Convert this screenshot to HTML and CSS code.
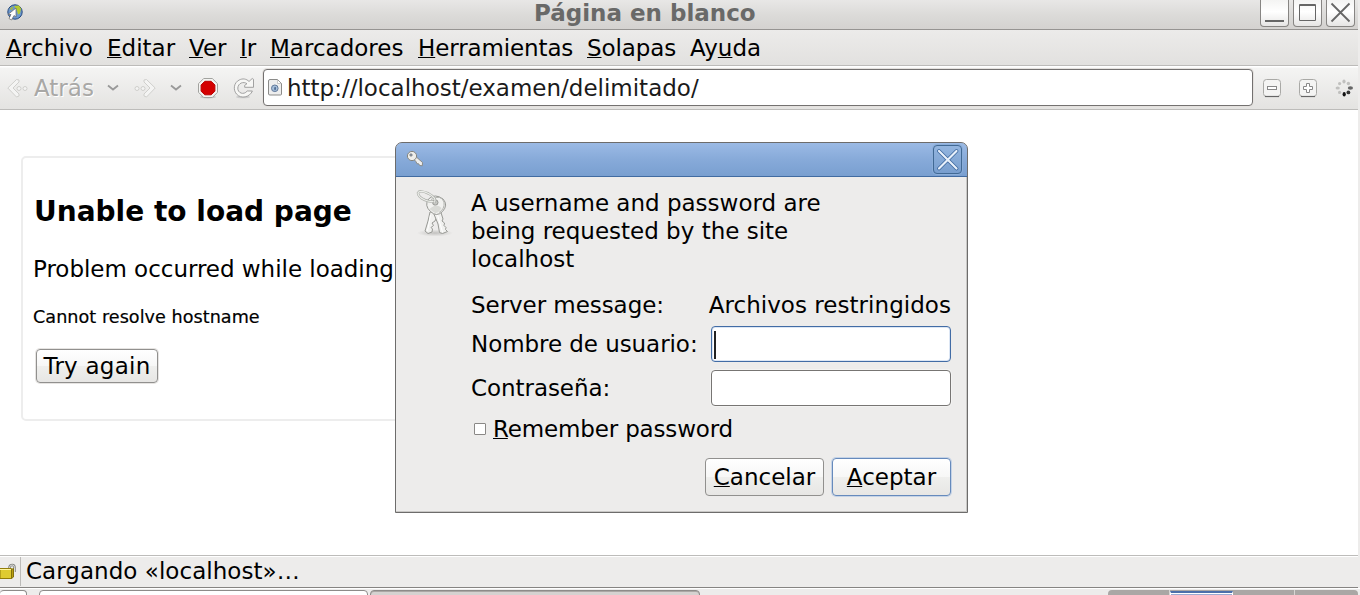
FILE: index.html
```html
<!DOCTYPE html>
<html lang="es">
<head>
<meta charset="utf-8">
<title>Página en blanco</title>
<link rel="stylesheet" href="styles.css">
</head>
<body>
<div class="screen">
  <main class="browser">
    <header class="titlebar">
      <svg class="app-icon" width="18" height="18" viewBox="0 0 18 18"><circle cx="9" cy="8" r="7.200" fill="#6b98cf" stroke="#24477e"/><path d="M8 2l5-.5 2 3-1 5-2 1-1-4z" fill="#b5c92f"/><path d="M3.500 4.500l3-2 1 1-2 3z" fill="#9db451"/><path d="M10 4v9l-2-1.500-2.500 4.500-2.500-1.500 2-4H2z" fill="#fff" stroke="#666" stroke-width=".7"/></svg>
      <h1 class="title"><span>Página en blanco</span></h1>
      <div class="window-buttons">
        <button class="window-button" aria-label="Minimizar"><svg width="27" height="26"><path d="M4 21h19" stroke="#666" stroke-width="2"/></svg></button>
        <button class="window-button" aria-label="Maximizar"><svg width="27" height="26"><path d="M5.500 4.500h16v16h-16zM5 5.500h17" fill="none" stroke="#666"/></svg></button>
        <button class="window-button" aria-label="Cerrar"><svg width="27" height="26"><path d="M4.500 3.500l18 18M22.500 3.500l-18 18" stroke="#666" stroke-width="1.800"/></svg></button>
      </div>
    </header>
    <nav class="menubar">
      <span><u>A</u>rchivo</span><span><u>E</u>ditar</span><span><u>V</u>er</span><span><u>I</u>r</span><span><u>M</u>arcadores</span><span><u>H</u>erramientas</span><span><u>S</u>olapas</span><span>Ay<u>u</u>da</span>
    </nav>
    <div class="toolbar">
      <div class="back">
        <svg width="22" height="22" viewBox="0 0 22 22" fill="#f4f4f3" stroke="#cfcfcc" stroke-width="1"><path d="M9.500 2.500L.8 11l8.700 9 2.500-1v-2l-6-6 6-6V3z"/><circle cx="12" cy="11.500" r="2"/><circle cx="18" cy="11.500" r="2"/></svg>
        <span>Atrás</span>
      </div>
      <svg class="chevron" width="12" height="8"><path d="M1 1.500l5 4 5-4" fill="none" stroke="#999" stroke-width="1.800"/></svg>
      <svg class="forward" width="22" height="22" viewBox="0 0 22 22" fill="#f4f4f3" stroke="#cfcfcc"><path d="M12.500 2.500l8.700 8.500-8.700 9-2.500-1v-2l6-6-6-6V3z"/><circle cx="3" cy="11.500" r="2"/><circle cx="9" cy="11.500" r="2"/></svg>
      <svg class="chevron second" width="12" height="8"><path d="M1 1.500l5 4 5-4" fill="none" stroke="#999" stroke-width="1.800"/></svg>
      <svg class="stop" width="22" height="22" viewBox="0 0 22 22"><ellipse cx="11" cy="20" rx="8" ry="1.500" fill="#c4c4c2"/><path d="M6.700 1.500h8.600l5.200 5.200v8.600l-5.200 5.200H6.700l-5.200-5.200V6.700z" fill="#f4f4f2" stroke="#a2a39f"/><path d="M7.800 4.300h6.400l3.700 3.700v6.200l-3.700 3.600H7.800l-3.700-3.600V8z" fill="#d40000" stroke="#b00"/></svg>
      <svg class="reload" width="22" height="22" viewBox="0 0 22 22"><ellipse cx="10" cy="20" rx="7" ry="1.300" fill="#ccc"/><path d="M16 4.500l3.200-3 1.300.8v8h-8.800v-2l2.300-1.600C10.500 4.200 5.200 6 4.800 11c-.3 5 6 7.500 9.400 3h5.200C17 20 8 22.500 3.500 17-.3 12.500 1 5.500 6.200 3 9.500 1.200 13.500 1.700 16 4.500z" fill="#f7f7f5" stroke="#999" stroke-width=".9"/></svg>
      <div class="address">
        <svg width="14" height="17" viewBox="0 0 14 17"><path d="M2 .5h7.500l4 4V15q0 1-1 1H2q-1.500 0-1.500-1V2Q.5.500 2 .5z" fill="#eee" stroke="#8b8b89"/><path d="M9.500 1v3.500H13" fill="#fff" stroke="#aaa" stroke-width=".6"/><circle cx="6.800" cy="9.300" r="3.300" fill="#a5bed9" stroke="#62799a"/><path d="M6 8.500l2-.5v2.500l-1.500 1z" fill="#526e96"/></svg>
        <span>http://localhost/examen/delimitado/</span>
      </div>
      <svg class="zoom-out" width="20" height="20" viewBox="0 0 20 20"><rect x="1.500" y="1.500" width="17" height="17" rx="3" fill="#f4f4f3" stroke="#a9a9a6"/><path d="M3 18.500h14" stroke="#666" stroke-width="1.200"/><rect x="5.500" y="8.500" width="9" height="3" fill="#fff" stroke="#888"/></svg>
      <svg class="zoom-in" width="20" height="20" viewBox="0 0 20 20"><rect x="1.500" y="1.500" width="17" height="17" rx="3" fill="#f4f4f3" stroke="#a9a9a6"/><path d="M3 18.500h14" stroke="#666" stroke-width="1.200"/><path d="M8.500 5.500h3v3h3v3h-3v3h-3v-3h-3v-3h3z" fill="#fff" stroke="#888"/></svg>
      <svg class="spinner" width="18" height="18" viewBox="0 0 18 18"><g fill="#c0c0be"><ellipse cx="9" cy="2.500" rx="1.600" ry="2.100"/><circle cx="13.400" cy="4.500" r="1.700"/><circle cx="4.600" cy="4.600" r="1.600"/><ellipse cx="2.700" cy="9" rx="2.100" ry="1.500"/><circle cx="4.600" cy="13.400" r="1.600"/></g><ellipse cx="15.400" cy="9" rx="2.600" ry="1.700" fill="#666"/><circle cx="13.400" cy="13.400" r="1.900" fill="#333"/><ellipse cx="9.200" cy="15.200" rx="1.600" ry="2.300" fill="#111"/></svg>
    </div>
    <section class="page">
      <article class="error">
        <h2>Unable to load page</h2>
        <p class="problem">Problem occurred while loading</p>
        <p class="reason">Cannot resolve hostname</p>
        <button class="button retry">Try again</button>
      </article>
    </section>
    <footer class="status">
      <svg width="18" height="18" viewBox="0 0 18 18"><path d="M9.500 6V4.200Q10 2 12.300 2 14.500 2 14.500 4.500V9" fill="none" stroke="#858783" stroke-width="2.600"/><path d="M9.500 6V4.200Q10 2 12.300 2 14.500 2 14.500 4.500V9" fill="none" stroke="#ddd" stroke-width="1"/><path d="M0 5.500h11.500v10H0z" fill="#dfcb31" stroke="#927c08"/><path d="M11.500 6.500l2-1v8.500l-2 1.500z" fill="#b99d12" stroke="#81700c"/><path d="M0 6.500h11" stroke="#fff6a0"/></svg>
      <span>Cargando «localhost»…</span>
    </footer>
  </main>
  <div class="taskbar">
    <span class="task first"></span><span class="task second"></span><span class="task active"></span>
    <div class="pager"><span></span><span class="current"></span><span></span><span></span></div>
  </div>
  <div class="dialog" role="dialog">
    <header class="dialog-title">
      <svg width="18" height="18" viewBox="0 0 18 18"><path d="M7.700 9l2.300-2.300 6.500 5.800-.2 3.300-2.600-.3-1-1.700-1.800-.1-.7-1.800z" fill="#eee" stroke="#85857f" stroke-width=".9"/><circle cx="6" cy="6" r="4.600" fill="#eeeeea" stroke="#85857f"/><circle cx="5" cy="5" r="1.300" fill="#8a96a5" stroke="#777" stroke-width=".5"/></svg>
      <button class="dialog-close" aria-label="Cerrar"><svg width="27" height="27"><path d="M5 5l17.500 17.500M22.500 5L5 22.500" stroke="#3c679d" stroke-width="3.800" stroke-linecap="round"/><path d="M5 5l17.500 17.500M22.500 5L5 22.500" stroke="#e9f1fb" stroke-width="2.200" stroke-linecap="round"/></svg></button>
    </header>
    <div class="dialog-body">
      <svg class="keys" width="38" height="48" viewBox="0 0 38 48"><defs><radialGradient id="shade"><stop offset="0" stop-color="#c2c1bf"/><stop offset="1" stop-color="#edeceb"/></radialGradient></defs><ellipse cx="19" cy="43" rx="18" ry="3.500" fill="url(#shade)"/><g stroke="#979894" fill="#f1f1ef"><path d="M14 22l-2 9-3 10 3 2.500 4-1.500.5-3-1.500-1.500 2.500-2-1.500-2.500 3-2 4-9z"/><path d="M17.500 23l4.500 11 1.500 8.500 3 1 5-2-2-2 .5-2-2-2 .5-2.500-2.500-2 1-2-2.500-8z"/><path d="M12.500 9Q19 3 27 9q5.500 6-.5 12.500-6 6-12 0-6.500-6-2-12.500z"/><path d="M15 9.500q10-5.500 13 2.500 1 7-5 10.500" fill="none" stroke="#b4b5b1"/><path d="M14.500 25l-3 16M21.500 25l5 17" fill="none" stroke="#fff"/><circle cx="19.300" cy="12.500" r="2.700" fill="#c6c7c3"/></g><path d="M13.500 19q7-6.500 12-1-4 7-8 4z" fill="#d9dad6"/><g fill="none"><path d="M18.500 12.500Q21 8 12.500 3.500 3.500-.5 2 3q0 4 7 7 5 2 8.500 1.500" stroke="#adafaa" stroke-width="2.500"/><path d="M18.500 12.500Q21 8 12.500 3.500 3.500-.5 2 3q0 4 7 7 5 2 8.500 1.500" stroke="#eceeea" stroke-width="1.200"/></g></svg>
      <form class="form" onsubmit="return false">
        <p class="message">A username and password are<br>being requested by the site<br>localhost</p>
        <div class="row server"><span>Server message:</span><span class="realm">Archivos restringidos</span></div>
        <div class="row user"><span>Nombre de usuario:</span><div class="field focused"><i></i></div></div>
        <div class="row secret"><span>Contraseña:</span><div class="field"></div></div>
        <div class="remember"><i class="checkbox"></i><span><u>R</u>emember password</span></div>
        <div class="actions"><button class="button"><span><u>C</u>ancelar</span></button><button class="button default"><span><u>A</u>ceptar</span></button></div>
      </form>
    </div>
  </div>
</div>
</body>
</html>
```

FILE: styles.css
```css
* { box-sizing: border-box; }
body { margin: 0; overflow: hidden; background: #edeceb; font: 23px/28px "DejaVu Sans", sans-serif; color: #000; }
button { font: inherit; color: inherit; margin: 0; padding: 0; }
h1, h2, p { margin: 0; }
svg { display: block; flex: none; }
u { text-decoration-thickness: 1px; text-underline-offset: 1px; text-decoration-skip-ink: none; }
.screen { position: relative; width: 1360px; height: 595px; overflow: hidden; white-space: nowrap; }
.browser { width: 1358px; height: 588px; display: flex; flex-direction: column; border-bottom: 1px solid #868482; }
.titlebar { display: flex; height: 30px; flex: none; border-bottom: 1px solid #969492; background: linear-gradient(#e8e7e6, #dcdbd9 50%, #d4d2d0); }
.app-icon { margin: 4px 0 0 6px; }
.title { flex: 1; padding: 0 0 0 510px; font-size: 23px; line-height: 26px; color: #696968; }
.window-buttons { display: flex; gap: 4px; padding-right: 3px; }
.window-button { width: 29px; height: 27px; border: 1px solid #878583; border-top: 0; border-radius: 0 0 4px 4px; background: linear-gradient(#f4f4f3, #fff 45%, #e6e5e4); }
.menubar { display: flex; flex: none; height: 36px; padding: 4px 0 0 6px; background: linear-gradient(#ecebea, #e2e1df); border-bottom: 1px solid #bcbbb9; }
.menubar span { width: 101px; }
.menubar span:first-child { letter-spacing: .12px; }
.menubar span:nth-child(2) { width: 82px; }
.menubar span:nth-child(3) { width: 51px; }
.menubar span:nth-child(4) { width: 30px; }
.menubar span:nth-child(5) { width: 148px; }
.menubar span:nth-child(6) { width: 169px; letter-spacing: -.12px; }
.menubar span:nth-child(7) { width: 103px; letter-spacing: -.12px; }
.toolbar { display: flex; align-items: center; flex: none; height: 44px; padding-left: 7px; background: linear-gradient(#fff 1px, #f4f4f3 2px, #e4e3e1); border-bottom: 1px solid #bdbcba; }
.back { display: flex; align-items: center; width: 100px; gap: 5px; color: #a9a8a6; text-shadow: 1px 1px #fff; }
.forward { margin-left: 15px; }
.chevron.second { margin-left: 14px; }
.stop { margin-left: 15px; }
.reload { margin-left: 14px; }
.address { display: flex; align-items: center; width: 990px; height: 37px; margin-left: 8px; padding-left: 4px; gap: 5px; background: #fff; border: 1px solid #737170; border-radius: 4px; box-shadow: 0 0 0 1px #e4e1de; color: #1a1a1a; }
.zoom-out { margin-left: 9px; }
.zoom-in { margin-left: 16px; }
.spinner { margin-left: 17px; }
.page { flex: 1; padding: 46px 0 0 21px; background: #fff; }
.error { width: 850px; height: 265px; padding: 36px 0 0 10px; border: 2px solid #ededed; border-radius: 5px; }
.error h2 { padding-left: 1px; font-size: 28px; line-height: 36px; }
.problem { margin-top: 25px; letter-spacing: -.03px; }
.reason { margin-top: 23px; font-size: 17.600px; line-height: 22px; letter-spacing: .04px; -webkit-text-stroke: .2px #000; }
.button { display: flex; align-items: center; justify-content: center; border: 1px solid #91908e; border-radius: 4px; background: linear-gradient(#fff, #f7f7f6 50%, #efefed 51%, #e7e6e4); }
.retry { width: 122px; height: 34px; margin: 21px 0 0 3px; letter-spacing: .25px; box-shadow: 0 0 0 1px #e6e4e2; }
.status { flex: none; display: flex; height: 32px; border-top: 1px solid #bdbcba; box-shadow: inset 0 1px #fff; background: #edeceb; }
.status svg { margin: 7px 2px 0 0; }
.status span { height: 29px; margin-top: 1px; padding: 0 5px; border-left: 1px solid #bcbbb9; line-height: 29px; letter-spacing: .04px; }
.taskbar { height: 7px; display: flex; padding-top: 1px; border-top: 1px solid #fff; background: #edeceb; }
.task { width: 329px; height: 20px; flex: none; border: 1px solid #8d8b89; border-radius: 4px; background: #fff; }
.task.first { width: 27px; margin-right: 12px; border-left: 0; }
.task.active { width: 330px; margin-left: 2px; background: #d5d2d0; box-shadow: inset 0 1px #aaa7a4; }
.pager { display: flex; width: 250px; height: 20px; margin-left: 408px; overflow: hidden; border-radius: 4px; background: #aaa7a5; }
.pager span { width: 62px; border-right: 1px solid #d8d6d4; }
.pager .current { width: 63px; margin-top: 1px; border: 1px solid #fff; border-top: 2px solid #4b6faa; box-shadow: inset 0 1px #fff; background: #9aabd2; }
.pager span:last-child { border: 0; }
.dialog { position: absolute; left: 395px; top: 142px; width: 573px; height: 371px; border: 1px solid #6d6c6b; border-radius: 7px 7px 0 0; overflow: hidden; background: #edeceb; box-shadow: inset -1px -1px #c9c8c6; }
.dialog-title { display: flex; justify-content: space-between; height: 35px; padding: 7px 5px 0 10px; margin: -1px -1px 0; border: 1px solid #416ba1; border-radius: 7px 7px 0 0; background: linear-gradient(#9bbae5, #87aad9 50%, #799fd0); }
.dialog-close { width: 29px; height: 29px; margin-top: -5px; border: 1px solid #416994; border-radius: 4px; background: linear-gradient(#93b5df, #789ece); box-shadow: 0 0 0 1px #8baed9; }
.dialog-body { display: flex; padding: 12px 16px 0 20px; }
.keys { margin-top: 1px; }
.form { width: 480px; margin-left: 17px; }
.message { height: 84px; }
.row { display: flex; align-items: center; }
.row > span:first-child { width: 240px; letter-spacing: -.06px; }
.server { margin-top: 18px; height: 28px; }
.server .realm { letter-spacing: .04px; }
.user { margin-top: 7px; height: 36px; }
.secret { margin-top: 8px; height: 36px; }
.field { width: 240px; height: 36px; padding: 4px 3px; background: #fff; border: 1px solid #777573; border-radius: 4px; box-shadow: 0 0 0 1px #f3f3f2; }
.focused { border-color: #426ca5; box-shadow: inset 0 0 0 1px #dce6f4; }
.focused i { display: block; width: 2px; height: 28px; background: #222; margin-left: -1px; }
.remember { display: flex; align-items: center; margin-top: 8px; height: 29px; gap: 7px; padding-left: 3px; letter-spacing: -.16px; }
.checkbox { width: 12px; height: 12px; border: 1px solid #8a8886; border-radius: 1px; background: #fff; }
.actions { display: flex; justify-content: flex-end; gap: 8px; margin-top: 15px; }
.actions .button { width: 119px; height: 38px; }
.actions .default { border-color: #668abc; box-shadow: 0 0 0 1px #c5d3e6; }
```
